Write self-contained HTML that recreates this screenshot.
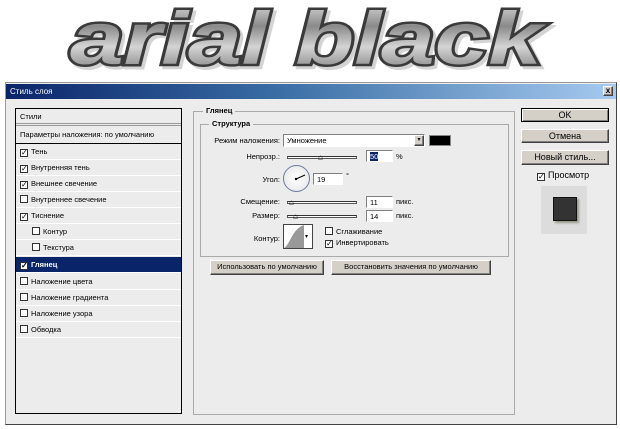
<!DOCTYPE html>
<html><head><meta charset="utf-8"><style>
*{margin:0;padding:0;box-sizing:border-box}
body{width:620px;height:429px;background:#fff;position:relative;overflow:hidden;font-family:"Liberation Sans",sans-serif;font-size:8px;color:#000}
.abs{position:absolute}
.btn{position:absolute;background:#d4d0c8;border:1px solid;border-color:#fff #404040 #404040 #fff;box-shadow:inset -1px -1px 0 #808080;text-align:center;font-size:9px;line-height:12px}
.cb{display:inline-block;width:8px;height:8px;border:1px solid #333;background:#fff;vertical-align:-1px;margin-right:3px;font-size:8px;line-height:6px;text-align:center}
.row{position:absolute;left:16px;width:165px;height:16px;border-bottom:1px solid #fff;line-height:16px;padding-left:4px;font-size:7.5px}
.inp{position:absolute;background:#fff;border:1px solid;border-color:#808080 #fff #fff #808080;font-size:7.5px;line-height:11px;padding-left:3px}
.sl{position:absolute;height:3px;border:1px solid #555;border-top-color:#333;background:#fff}
.lbl{position:absolute;font-size:7.5px;text-align:right}
</style></head><body>
<svg class="abs" style="left:0;top:0" width="620" height="80">
<defs><linearGradient id="g" x1="0" y1="0" x2="0" y2="1"><stop offset="0" stop-color="#e8e8e8"/><stop offset=".35" stop-color="#8a8a8a"/><stop offset=".6" stop-color="#d4d4d4"/><stop offset="1" stop-color="#6a6a6a"/></linearGradient></defs>
<text x="70" y="64" font-family="Liberation Sans" font-weight="bold" font-style="italic" font-size="74" fill="#999" stroke="#aaa" stroke-width="5" textLength="472" lengthAdjust="spacingAndGlyphs" transform="translate(3,3)" opacity=".5">arial black</text>
<text x="70" y="64" font-family="Liberation Sans" font-weight="bold" font-style="italic" font-size="74" fill="url(#g)" stroke="#3a3a3a" stroke-width="5" paint-order="stroke" textLength="472" lengthAdjust="spacingAndGlyphs">arial black</text>
</svg>
<div class="abs" style="left:5px;top:82px;width:612px;height:343px;background:#ececec;border:1px solid #999;border-right-color:#404040;border-bottom-color:#404040"></div>
<div class="abs" style="left:6px;top:84px;width:610px;height:15px;background:linear-gradient(90deg,#0a246a,#3a6ea5 45%,#a6caf0);color:#fff;font-size:8px;line-height:15px;padding-left:4px">Стиль слоя</div>
<div class="btn" style="left:603px;top:86px;width:10px;height:10px;line-height:8px;font-size:8px;font-weight:bold">x</div>
<div class="abs" style="left:15px;top:108px;width:167px;height:306px;border:1px solid #000;background:#ececec"></div>
<div class="row" style="top:109px;height:17px;border-bottom:3px double #999">Стили</div>
<div class="row" style="top:127px;height:17px;border-bottom:1px solid #000">Параметры наложения: по умолчанию</div>
<div class="row" style="top:144px"><span class="cb">✓</span>Тень</div>
<div class="row" style="top:160px"><span class="cb">✓</span>Внутренняя тень</div>
<div class="row" style="top:176px"><span class="cb">✓</span>Внешнее свечение</div>
<div class="row" style="top:192px"><span class="cb"></span>Внутреннее свечение</div>
<div class="row" style="top:208px"><span class="cb">✓</span>Тиснение</div>
<div class="row" style="top:224px;padding-left:16px"><span class="cb"></span>Контур</div>
<div class="row" style="top:240px;padding-left:16px"><span class="cb"></span>Текстура</div>
<div class="row" style="top:257px;background:#0a246a;color:#fff;font-weight:bold"><span class="cb" style="color:#000">✓</span>Глянец</div>
<div class="row" style="top:274px"><span class="cb"></span>Наложение цвета</div>
<div class="row" style="top:290px"><span class="cb"></span>Наложение градиента</div>
<div class="row" style="top:306px"><span class="cb"></span>Наложение узора</div>
<div class="row" style="top:322px"><span class="cb"></span>Обводка</div>
<div class="abs" style="left:193px;top:111px;width:322px;height:304px;border:1px solid #aaa"></div>
<div class="abs" style="left:203px;top:106px;background:#ececec;padding:0 3px;font-size:7.5px;font-weight:bold">Глянец</div>
<div class="abs" style="left:200px;top:124px;width:309px;height:133px;border:1px solid #aaa"></div>
<div class="abs" style="left:209px;top:119px;background:#ececec;padding:0 3px;font-size:7.5px;font-weight:bold">Структура</div>
<div class="lbl" style="left:200px;top:136px;width:80px">Режим наложения:</div>
<div class="inp" style="left:283px;top:134px;width:142px;height:13px">Умножение</div>
<div class="btn" style="left:414px;top:135px;width:10px;height:11px;font-size:6px;line-height:9px">▾</div>
<div class="abs" style="left:429px;top:135px;width:22px;height:11px;background:#000;border:1px solid #888"></div>
<div class="lbl" style="left:200px;top:152px;width:80px">Непрозр.:</div>
<div class="sl" style="left:287px;top:156px;width:70px"></div>
<div class="abs" style="left:318px;top:153px;font-size:8px">⌂</div>
<div class="inp" style="left:366px;top:150px;width:27px;height:12px"><span style="background:#0a246a;color:#fff">50</span></div>
<div class="lbl" style="left:396px;top:152px">%</div>
<div class="lbl" style="left:200px;top:175px;width:80px">Угол:</div>
<div class="abs" style="left:283px;top:165px;width:27px;height:27px;border-radius:50%;border:1px solid #6a7aa0;background:radial-gradient(#fff,#e4e4e4)"></div>
<svg class="abs" style="left:283px;top:165px" width="28" height="28"><line x1="13" y1="14" x2="22" y2="10" stroke="#000" stroke-width="1"/><circle cx="13" cy="14" r="1.2"/></svg>
<div class="inp" style="left:313px;top:173px;width:30px;height:12px">19</div>
<div class="lbl" style="left:346px;top:171px">°</div>
<div class="lbl" style="left:200px;top:197px;width:80px">Смещение:</div>
<div class="sl" style="left:287px;top:201px;width:70px"></div>
<div class="abs" style="left:289px;top:198px;font-size:8px">⌂</div>
<div class="inp" style="left:366px;top:196px;width:27px;height:12px">11</div>
<div class="lbl" style="left:396px;top:197px">пикс.</div>
<div class="lbl" style="left:200px;top:211px;width:80px">Размер:</div>
<div class="sl" style="left:287px;top:215px;width:70px"></div>
<div class="abs" style="left:293px;top:212px;font-size:8px">⌂</div>
<div class="inp" style="left:366px;top:210px;width:27px;height:12px">14</div>
<div class="lbl" style="left:396px;top:211px">пикс.</div>
<div class="lbl" style="left:200px;top:234px;width:80px">Контур:</div>
<div class="abs" style="left:283px;top:224px;width:30px;height:25px;border:1px solid #444;background:#fff"></div>
<svg class="abs" style="left:284px;top:225px" width="20" height="23"><path d="M0 23 C6 20 8 4 20 0 L20 23Z" fill="#999"/></svg>
<div class="abs" style="left:305px;top:233px;font-size:6px">▾</div>
<div class="lbl" style="left:325px;top:227px"><span class="cb"></span>Сглаживание</div>
<div class="lbl" style="left:325px;top:238px"><span class="cb">✓</span>Инвертировать</div>
<div class="btn" style="left:210px;top:260px;width:114px;height:15px;font-size:7.5px">Использовать по умолчанию</div>
<div class="btn" style="left:331px;top:260px;width:160px;height:15px;font-size:7.5px">Восстановить значения по умолчанию</div>
<div class="btn" style="left:521px;top:108px;width:88px;height:14px;border-color:#000;box-shadow:inset 1px 1px 0 #fff,inset -1px -1px 0 #808080">OK</div>
<div class="btn" style="left:521px;top:129px;width:88px;height:14px">Отмена</div>
<div class="btn" style="left:521px;top:150px;width:88px;height:15px">Новый стиль...</div>
<div class="abs" style="left:537px;top:170px;font-size:9px"><span class="cb">✓</span>Просмотр</div>
<div class="abs" style="left:541px;top:186px;width:46px;height:48px;background:#dcdcdc;border:1px solid #ddd"></div>
<div class="abs" style="left:553px;top:197px;width:24px;height:24px;background:#333;border:1px solid #111;box-shadow:2px 2px 2px #998"></div>
</body></html>
